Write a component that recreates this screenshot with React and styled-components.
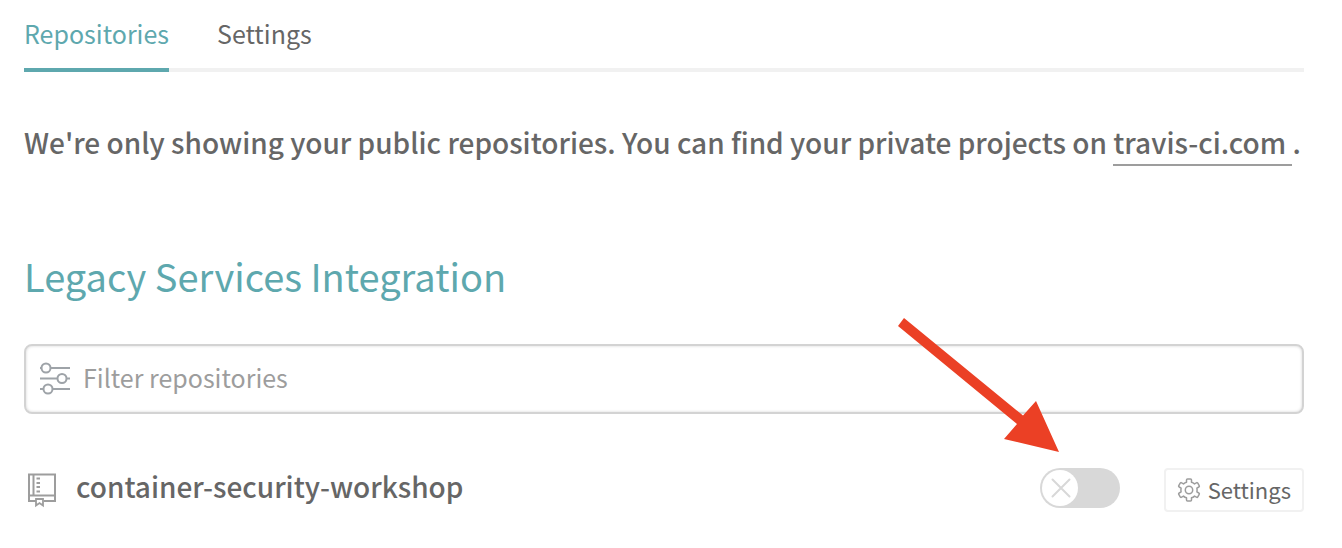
import React from "react";
import styled, { createGlobalStyle } from "styled-components";

const teal = "#5ea8ae";
const text = "#666666";
const muted = "#9d9d9d";

const GlobalStyle = createGlobalStyle`
  *, *::before, *::after { box-sizing: border-box; }
  body {
    margin: 0;
    background: #ffffff;
    color: ${text};
    font-family: "Noto Sans CJK SC", "Noto Sans", sans-serif;
    font-size: 28px;
  }
  h1, p, ul { margin: 0; padding: 0; }
`;

const Page = styled.main`
  padding: 0 38px 36px 24px;
`;

const Tabs = styled.nav`
  display: flex;
  gap: 48px;
  height: 72px;
  box-shadow: inset 0 -4px 0 #f1f1f1;
`;

const Tab = styled.a`
  padding-top: 14px;
  font-size: 25px;
  line-height: 38px;
  text-decoration: none;
  color: ${(p) => (p.$active ? teal : text)};
  border-bottom: 4px solid ${(p) => (p.$active ? teal : "transparent")};
`;

const Notice = styled.p`
  padding-top: 50px;
  font-weight: 500;
  line-height: 40px;
`;

const NoticeLink = styled.a`
  padding-bottom: 2px;
  color: inherit;
  text-decoration: none;
  border-bottom: 2px solid ${muted};
  white-space: pre;
`;

const Title = styled.h1`
  padding-top: 84px;
  font-size: 38px;
  font-weight: 400;
  line-height: 60px;
  color: ${teal};
`;

const Filter = styled.label`
  display: flex;
  align-items: center;
  gap: 12px;
  height: 70px;
  margin-top: 38px;
  padding: 0 14px;
  border: 2px solid #d3d3d3;
  border-radius: 8px;
  box-shadow: inset 0 0 3px #d3d3d3;
`;

const FilterInput = styled.input`
  flex: 1;
  min-width: 0;
  padding: 0 0 4px;
  border: 0;
  outline: 0;
  background: transparent;
  color: ${text};
  font-family: inherit;
  font-size: 25px;
  line-height: 40px;
  &::placeholder { color: ${muted}; opacity: 1; }
`;

const RepoList = styled.ul`
  list-style: none;
  margin-top: 54px;
`;

const RepoRow = styled.li`
  display: flex;
  align-items: flex-start;
`;

const RepoName = styled.span`
  flex: 1;
  padding-left: 16px;
  font-weight: 500;
  line-height: 36px;
`;

const ToggleArea = styled.div`
  position: relative;
  width: 80px;
  height: 40px;
  margin-right: 44px;
`;

const Toggle = styled.label`
  display: flex;
  padding: 2px;
  height: 40px;
  border-radius: 20px;
  background: #d8d8d8;
  cursor: pointer;
`;

const ToggleInput = styled.input`
  position: absolute;
  inset: 0;
  margin: 0;
  opacity: 0;
`;

const Knob = styled.span`
  width: 36px;
  height: 36px;
  border-radius: 50%;
  background: #ffffff;
  ${ToggleInput}:checked + & { margin-left: 40px; }
`;

const Arrow = styled.svg`
  position: absolute;
  right: 61px;
  bottom: 56px;
  pointer-events: none;
`;

const SettingsButton = styled.button`
  display: flex;
  align-items: center;
  gap: 7px;
  height: 44px;
  padding: 0 11px 2px;
  border: 2px solid #f1f1f1;
  border-radius: 4px;
  background: #ffffff;
  color: ${text};
  font-family: inherit;
  font-size: 22px;
  line-height: 32px;
`;

const SlidersIcon = () => (
  <svg width="31" height="34" viewBox="0 0 31 34" fill="none" stroke="#9ea3a8" strokeWidth="2" aria-hidden="true">
    <circle cx="6" cy="6" r="4.5" />
    <circle cx="22" cy="16.5" r="4.5" />
    <circle cx="8" cy="27" r="4.5" />
    <path d="M0 6h1.5M10.5 6H30M0 16.5h17.5M26.5 16.5H30M0 27h3.5M12.5 27H30" />
  </svg>
);

const RepoIcon = () => (
  <svg width="36" height="40" viewBox="0 0 36 40" fill="none" stroke="#9d9d9d" strokeWidth="2" aria-hidden="true">
    <path d="M12 33H5V6.500h26V33H20M9.500 6.500V27M5 27.500h26" />
    <path d="M12 31h7v6.500l-3.500-2.500-3.500 2.500z" strokeWidth="1.800" />
    <path d="M12.500 10.500h3.500M12.500 15h3.500M12.500 19h3.500M12.500 23.500h3.500" />
  </svg>
);

const CrossIcon = () => (
  <svg width="36" height="36" viewBox="0 0 36 36" stroke="#d8d8d8" strokeWidth="2" strokeLinecap="round" aria-hidden="true">
    <path d="M10.500 9.500l17 17M27.500 9.500l-17 17" />
  </svg>
);

const GearIcon = () => (
  <svg width="24" height="24" viewBox="0 -1 24 24" fill="none" stroke="#9d9d9d" strokeWidth="1.500" strokeLinejoin="round" overflow="visible" aria-hidden="true">
    <circle cx="12" cy="12" r="3.700" />
    <path d="M10.500 1h3q1 0 1 1v2.200q1.700.5 3 1.700l1.900-1.100q.9-.5 1.400.4l1.400 2.400q.5.900-.4 1.400l-1.900 1.200q.4 1.800 0 3.600l1.900 1.200q.9.500.4 1.400l-1.400 2.400q-.5.900-1.400.4l-1.900-1.100q-1.300 1.200-3 1.700V22q0 1-1 1h-3q-1 0-1-1v-2.200q-1.700-.5-3-1.700l-1.900 1.100q-.9.500-1.400-.4l-1.400-2.400q-.5-.9.400-1.400l1.900-1.200q-.4-1.800 0-3.600L2.200 9q-.9-.5-.4-1.400l1.400-2.400q.5-.9 1.400-.4l1.900 1.100q1.300-1.200 3-1.700V2q0-1 1-1z" />
  </svg>
);

export default function App() {
  return (
    <>
      <GlobalStyle />
      <Page>
        <Tabs>
          <Tab href="#repositories" $active>Repositories</Tab>
          <Tab href="#settings">Settings</Tab>
        </Tabs>
        <Notice>
          We're only showing your public repositories. You can find your private projects on{" "}
          <NoticeLink href="#travis-ci">{"travis-ci.com "}</NoticeLink>.
        </Notice>
        <Title>Legacy Services Integration</Title>
        <Filter>
          <SlidersIcon />
          <FilterInput type="text" placeholder="Filter repositories" aria-label="Filter repositories" />
        </Filter>
        <RepoList>
          <RepoRow>
            <RepoIcon />
            <RepoName>container-security-workshop</RepoName>
            <ToggleArea>
              <Toggle>
                <ToggleInput type="checkbox" aria-label="Activate container-security-workshop" />
                <Knob><CrossIcon /></Knob>
              </Toggle>
              <Arrow width="162" height="134" viewBox="0 0 162 134" aria-hidden="true">
                <path d="M7 0L126 97.500L139 83L162 134L107 121L120 106L1 8z" fill="#eb4025" />
              </Arrow>
            </ToggleArea>
            <SettingsButton type="button"><GearIcon />Settings</SettingsButton>
          </RepoRow>
        </RepoList>
      </Page>
    </>
  );
}
